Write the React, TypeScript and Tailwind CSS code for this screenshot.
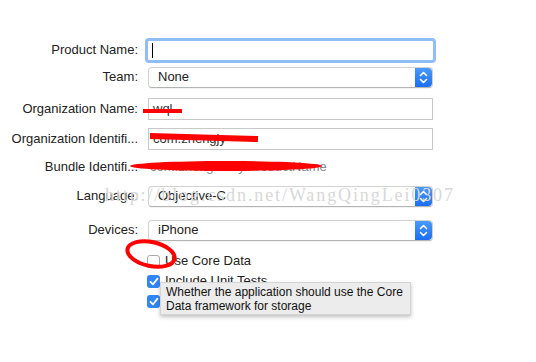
import type { ReactNode } from "react";

const font = { fontFamily: '"Liberation Sans", Arial, sans-serif' };

function Label({ children }: { children: ReactNode }) {
  return (
    <div className="w-[139px] shrink-0 text-right text-[13px] text-[#222] whitespace-nowrap pr-[1px]">
      {children}
    </div>
  );
}

function TextField({ value, muted }: { value?: string; muted?: boolean }) {
  return (
    <div
      className={`ml-[9px] w-[285px] h-[22px] border border-[#c9c9c9] bg-white px-[4px] flex items-center text-[13px] ${
        muted ? "text-[#777]" : "text-[#333]"
      }`}
    >
      {value}
    </div>
  );
}

function Stepper() {
  return (
    <div className="w-[17px] h-full rounded-r-[4px] bg-gradient-to-b from-[#4a9af9] to-[#1b6ef3] flex items-center justify-center">
      <svg width="9" height="13" viewBox="0 0 9 13" fill="none" stroke="white" strokeWidth="1.6" strokeLinecap="round" strokeLinejoin="round">
        <path d="M1.5 4.5 L4.5 1.5 L7.5 4.5" />
        <path d="M1.5 8.5 L4.5 11.5 L7.5 8.5" />
      </svg>
    </div>
  );
}

function Popup({ value }: { value: string }) {
  return (
    <div className="ml-[9px] w-[285px] h-[21px] rounded-[4px] border border-[#d2d2d2] border-b-[#b4b4b4] bg-white flex items-center shadow-[0_1px_0_rgba(0,0,0,0.05)]">
      <div className="flex-1 pl-[9px] text-[13px] text-[#222]">{value}</div>
      <Stepper />
    </div>
  );
}

function Checkbox({ checked, children }: { checked?: boolean; children: ReactNode }) {
  return (
    <div className="flex items-center h-[14px] pl-[147px]">
      {checked ? (
        <div className="w-[13px] h-[13px] rounded-[3px] bg-[#2f86f6] flex items-center justify-center">
          <svg width="10" height="9" viewBox="0 0 10 9" fill="none" stroke="white" strokeWidth="1.8" strokeLinecap="round" strokeLinejoin="round">
            <path d="M1.5 4.8 L4 7.3 L8.5 1.6" />
          </svg>
        </div>
      ) : (
        <div className="w-[13px] h-[13px] rounded-[3px] border border-[#a9a9a9] bg-white" />
      )}
      <span className="ml-[5px] text-[13px] text-[#222]">{children}</span>
    </div>
  );
}

export default function App() {
  return (
    <div className="relative w-[536px] h-[362px] bg-white overflow-hidden" style={font}>
      <div className="flex flex-col pt-[38px]">
        {/* product name */}
        <div className="flex items-center h-[24px]">
          <Label>Product Name:</Label>
          <div className="ml-[6px] w-[291px] h-[25px] rounded-[4px] border-[3px] border-[#90bdf3] bg-white flex items-center pl-[4px]">
            <div className="w-[1px] h-[15px] bg-black" />
          </div>
        </div>

        <div className="flex items-center h-[22px] mt-[4px]">
          <Label>Team:</Label>
          <Popup value="None" />
        </div>

        <div className="flex items-center h-[22px] mt-[10px]">
          <Label>Organization Name:</Label>
          <TextField value="wql" />
        </div>

        <div className="flex items-center h-[22px] mt-[8px]">
          <Label>Organization Identifi...</Label>
          <TextField value="com.zhengjy" />
        </div>

        <div className="flex items-center h-[20px] mt-[7px]">
          <Label>Bundle Identifi...</Label>
          <div className="ml-[9px] pl-[2px] text-[13px] text-[#8a8a8a] whitespace-nowrap">
            com.zhengdiany.ProductName
          </div>
        </div>

        <div className="flex items-center h-[22px] mt-[8px]">
          <Label>Language:</Label>
          <Popup value="Objective-C" />
        </div>

        <div className="flex items-center h-[22px] mt-[12px]">
          <Label>Devices:</Label>
          <Popup value="iPhone" />
        </div>

        <div className="flex flex-col mt-[13px] gap-[6px]">
          <Checkbox>Use Core Data</Checkbox>
          <Checkbox checked>Include Unit Tests</Checkbox>
          <Checkbox checked>Include UI Tests</Checkbox>
        </div>
      </div>

      {/* watermark */}
      <div
        className="absolute left-[105px] top-[182px] text-[18px] tracking-[1.9px] text-[#d8d8d8] whitespace-nowrap pointer-events-none"
        style={{ fontFamily: '"Liberation Serif", "Times New Roman", serif' }}
      >
        http://blog.csdn.net/WangQingLei0307
      </div>

      {/* red annotations */}
      <svg className="absolute inset-0 pointer-events-none" width="536" height="362">
        <path d="M143 111 L182 111" stroke="#f00" strokeWidth="4" />
        <path d="M150 136 L258 139" stroke="#f00" strokeWidth="6" />
        <ellipse cx="226" cy="166" rx="96" ry="5" fill="#f00" />
        <ellipse cx="151" cy="254" rx="24" ry="12" transform="rotate(12 151 254)" fill="none" stroke="#f00" strokeWidth="4" />
      </svg>

      {/* tooltip */}
      <div className="absolute left-[160px] top-[282px] w-[251px] h-[33px] bg-[#ececec] border border-[#d4d4d4] shadow-[0_2px_4px_rgba(0,0,0,0.25)] px-[5px] pt-[2px] text-[12px] leading-[14px] text-[#111] whitespace-nowrap">
        Whether the application should use the Core
        <br />
        Data framework for storage
      </div>
    </div>
  );
}
